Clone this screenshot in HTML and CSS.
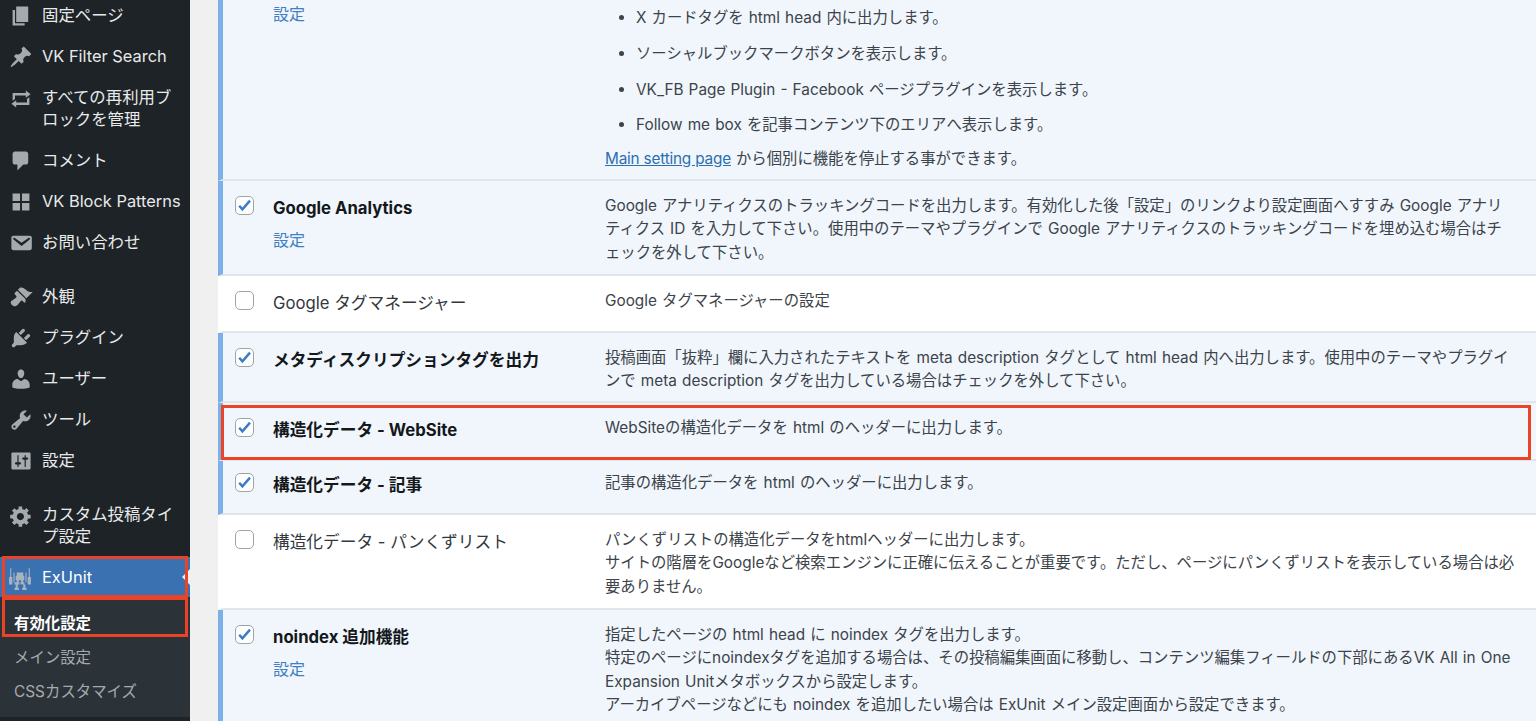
FILE: index.html
```html
<!DOCTYPE html>
<html lang="ja">
<head>
<meta charset="utf-8">
<title>ExUnit 有効化設定</title>
<link rel="stylesheet" href="styles.css">
</head>
<body>
<div class="app">
  <nav class="sidebar">
    <ul class="menu">
      <li class="item"><svg class="icon" viewBox="0 0 20 20"><path d="M6 15V2h10v13H6zm-1 1h8v2H3V5h2v11z"/></svg><span>固定ページ</span></li>
      <li class="item"><svg class="icon" viewBox="0 0 20 20"><path d="M10.44 3.02l1.82-1.82 6.36 6.35-1.83 1.82c-1.05-.68-2.48-.57-3.41.36l-.75.75c-.92.93-1.04 2.35-.35 3.41l-1.83 1.82-2.41-2.41-2.8 2.79c-.42.42-3.38 2.71-3.8 2.29s1.86-3.39 2.28-3.81l2.79-2.79L4.1 9.36l1.83-1.82c1.05.69 2.48.57 3.4-.36l.75-.75c.93-.92 1.05-2.35.36-3.41z"/></svg><span>VK Filter Search</span></li>
      <li class="item two"><svg class="icon" viewBox="0 0 20 20"><path d="M5 7v3l-2 1.5V5h11V3l4 3.01L14 9V7H5zm10 6v-3l2-1.5V15H6v2l-4-3.01L6 11v2h9z"/></svg><span>すべての再利用ブ<br>ロックを管理</span></li>
      <li class="item"><svg class="icon" viewBox="0 0 20 20"><path d="M5 2h9c1.1 0 2 .9 2 2v7c0 1.100-.9 2-2 2h-2l-5 5v-5H5c-1.100 0-2-.9-2-2V4c0-1.100.9-2 2-2z"/></svg><span>コメント</span></li>
      <li class="item"><svg class="icon" viewBox="0 0 20 20"><path d="M3 3h6.200v6.200H3zM10.800 3H17v6.200h-6.200zM3 10.800h6.200V17H3zM10.800 10.800H17V17h-6.200z"/></svg><span>VK Block Patterns</span></li>
      <li class="item"><svg class="icon" viewBox="0 0 20 20"><path d="M3.870 4h13.250C18.370 4 19 4.590 19 5.790v8.420c0 1.190-.63 1.790-1.880 1.790H3.870c-1.250 0-1.880-.6-1.880-1.790V5.790c0-1.200.63-1.790 1.880-1.790zm6.620 8.600l6.740-5.530c.24-.2.43-.66.13-1.070-.29-.41-.82-.42-1.170-.17l-5.700 3.860L4.800 5.830c-.35-.25-.88-.24-1.170.17-.3.41-.11.87.13 1.070z"/></svg><span>お問い合わせ</span></li>
      <li class="sep"></li>
      <li class="item"><svg class="icon" viewBox="0 0 20 20"><path d="M14.480 11.060L7.410 3.990l1.500-1.500c.5-.56 2.300-.47 3.510.32 1.210.8 1.430 1.280 2.910 2.100 1.180.64 2.450 1.260 4.450.85zm-.71.71L6.700 4.700 4.930 6.470c-.39.39-.39 1.020 0 1.410l1.060 1.060c.39.39.39 1.030 0 1.420-.6.6-1.430 1.110-2.210 1.690-.35.26-.7.53-1.010.84C1.430 13.230.78 15 2.500 16.720c1.700 1.700 3.500 1.050 4.840-.27.3-.3.57-.65.83-1 .58-.78 1.090-1.610 1.690-2.210.39-.39 1.030-.39 1.420 0l1.060 1.060c.39.39 1.020.39 1.410 0z"/></svg><span>外観</span></li>
      <li class="item"><svg class="icon" viewBox="0 0 20 20"><path d="M13.110 4.360L9.870 7.600 8 5.730l3.240-3.240c.35-.34 1.050-.2 1.560.32.52.51.66 1.210.31 1.550zm-8 1.770l.91-1.120 9.010 9.010-1.190.84c-.71.71-2.630 1.160-3.820 1.160H6.140L4.900 17.260c-.59.59-1.540.59-2.120 0-.59-.58-.59-1.530 0-2.120l1.240-1.240v-3.880c0-1.130.4-3.190 1.090-3.890zm7.260 3.970l3.240-3.240c.34-.35 1.040-.21 1.550.31.52.51.66 1.210.31 1.550l-3.240 3.250z"/></svg><span>プラグイン</span></li>
      <li class="item"><svg class="icon" viewBox="0 0 20 20"><path d="M10 9.250c-2.270 0-2.730-3.440-2.730-3.440C7 4.020 7.820 2 9.970 2c2.160 0 2.980 2.020 2.710 3.810 0 0-.41 3.440-2.680 3.440zm0 2.570L12.720 10c2.390 0 4.520 2.330 4.520 4.530v2.490s-3.650 1.130-7.240 1.130c-3.650 0-7.240-1.130-7.240-1.130v-2.490c0-2.250 1.940-4.530 4.470-4.530z"/></svg><span>ユーザー</span></li>
      <li class="item"><svg class="icon" viewBox="0 0 20 20"><path d="M16.680 9.770c-1.340 1.340-3.300 1.670-4.950.99l-5.410 6.520c-.99.99-2.590.99-3.580 0s-.99-2.590 0-3.570l6.520-5.420c-.68-1.650-.35-3.610.99-4.950 1.280-1.280 3.120-1.620 4.720-1.060l-2.890 2.890 2.820 2.820 2.860-2.870c.53 1.580.18 3.390-1.080 4.650zM3.810 16.210c.4.39 1.040.39 1.430 0 .4-.4.4-1.040 0-1.430-.39-.4-1.030-.4-1.430 0-.39.39-.39 1.030 0 1.430z"/></svg><span>ツール</span></li>
      <li class="item"><svg class="icon" viewBox="0 0 20 20"><path d="M18 16V4c0-.55-.45-1-1-1H3c-.55 0-1 .45-1 1v12c0 .55.45 1 1 1h14c.55 0 1-.45 1-1zM8 11h1c.55 0 1 .45 1 1s-.45 1-1 1H8v1.500c0 .28-.22.5-.5.5s-.5-.22-.5-.5V13H6c-.55 0-1-.45-1-1s.45-1 1-1h1V5.500c0-.28.22-.5.5-.5s.5.22.5.5V11zm5-2h-1c-.55 0-1-.45-1-1s.45-1 1-1h1V5.500c0-.28.22-.5.5-.5s.5.22.5.5V7h1c.55 0 1 .45 1 1s-.45 1-1 1h-1v5.500c0 .28-.22.5-.5.5s-.5-.22-.5-.5V9z"/></svg><span>設定</span></li>
      <li class="sep"></li>
      <li class="item two"><svg class="icon" viewBox="0 0 20 20"><path d="M18 12h-2.180c-.17.7-.44 1.350-.81 1.930l1.540 1.540-2.100 2.100-1.540-1.540c-.58.36-1.230.63-1.910.79V19H8v-2.180c-.68-.16-1.330-.43-1.910-.79l-1.540 1.540-2.120-2.120 1.540-1.540c-.36-.58-.63-1.230-.79-1.910H1V9.030h2.170c.16-.7.44-1.350.8-1.940L2.430 5.550l2.100-2.100 1.540 1.540c.58-.37 1.240-.64 1.930-.81V2h3v2.180c.68.16 1.330.43 1.910.79l1.540-1.540 2.120 2.120-1.540 1.540c.36.59.64 1.240.8 1.940H18V12zm-8.500 1.500c1.660 0 3-1.340 3-3s-1.340-3-3-3-3 1.340-3 3 1.340 3 3 3z"/></svg><span>カスタム投稿タイ<br>プ設定</span></li>
      <li class="item current">
        <svg class="icon robot" viewBox="0 0 20 22"><path d="M1 2h1v8h1v7H0v-7h1zM18 2h1v8h1v7h-3v-7h1zM4 6h1v9H4zM15 6h1v9h-1zM7 6h6v3h1v4h-1v2h-2v-2H9v2H7v-2H6V9h1zM6 15h3v2h1v-2h4v2h1v3h1v2h-4v-2h1v-3h-2v-1h-2v1H8v3h1v2H5v-2h1v-3H5v-2z"/></svg>
        <span>ExUnit</span>
      </li>
      <li class="sub">
        <div class="sub-item active">有効化設定</div>
        <div class="sub-item">メイン設定</div>
        <div class="sub-item">CSSカスタマイズ</div>
      </li>
    </ul>
    <div class="mark mark-top"></div>
    <div class="mark mark-sub"></div>
  </nav>
  <main class="content">
    <div class="table">
      <div class="row on first">
        <span></span>
        <div class="name"><a class="link">設定</a></div>
        <div class="desc">
          <ul class="bullets">
            <li>X カードタグを html head 内に出力します。</li>
            <li>ソーシャルブックマークボタンを表示します。</li>
            <li>VK_FB Page Plugin - Facebook ページプラグインを表示します。</li>
            <li>Follow me box を記事コンテンツ下のエリアへ表示します。</li>
          </ul>
          <a class="inline">Main setting page</a> から個別に機能を停止する事ができます。
        </div>
      </div>
      <div class="row on">
        <span class="check"><svg viewBox="0 0 20 20"><path d="M4 11l4 4.500L17.500 4.500"/></svg></span>
        <div class="name"><div class="title">Google Analytics</div><a class="link">設定</a></div>
        <div class="desc">Google アナリティクスのトラッキングコードを出力します。有効化した後「設定」のリンクより設定画面へすすみ Google アナリ<br>ティクス ID を入力して下さい。使用中のテーマやプラグインで Google アナリティクスのトラッキングコードを埋め込む場合はチ<br>ェックを外して下さい。</div>
      </div>
      <div class="row">
        <span class="check"></span>
        <div class="name"><div class="title">Google タグマネージャー</div></div>
        <div class="desc">Google タグマネージャーの設定</div>
      </div>
      <div class="row on">
        <span class="check"><svg viewBox="0 0 20 20"><path d="M4 11l4 4.500L17.500 4.500"/></svg></span>
        <div class="name"><div class="title">メタディスクリプションタグを出力</div></div>
        <div class="desc">投稿画面「抜粋」欄に入力されたテキストを meta description タグとして html head 内へ出力します。使用中のテーマやプラグイ<br>ンで meta description タグを出力している場合はチェックを外して下さい。</div>
      </div>
      <div class="row on">
        <span class="check"><svg viewBox="0 0 20 20"><path d="M4 11l4 4.500L17.500 4.500"/></svg></span>
        <div class="name"><div class="title">構造化データ - WebSite</div></div>
        <div class="desc">WebSiteの構造化データを html のヘッダーに出力します。</div>
      </div>
      <div class="row on tight">
        <span class="check"><svg viewBox="0 0 20 20"><path d="M4 11l4 4.500L17.500 4.500"/></svg></span>
        <div class="name"><div class="title">構造化データ - 記事</div></div>
        <div class="desc">記事の構造化データを html のヘッダーに出力します。</div>
      </div>
      <div class="row">
        <span class="check"></span>
        <div class="name"><div class="title">構造化データ - パンくずリスト</div></div>
        <div class="desc">パンくずリストの構造化データをhtmlヘッダーに出力します。<br>サイトの階層をGoogleなど検索エンジンに正確に伝えることが重要です。ただし、ページにパンくずリストを表示している場合は必<br>要ありません。</div>
      </div>
      <div class="row on">
        <span class="check"><svg viewBox="0 0 20 20"><path d="M4 11l4 4.500L17.500 4.500"/></svg></span>
        <div class="name"><div class="title">noindex 追加機能</div><a class="link">設定</a></div>
        <div class="desc">指定したページの html head に noindex タグを出力します。<br>特定のページにnoindexタグを追加する場合は、その投稿編集画面に移動し、コンテンツ編集フィールドの下部にあるVK All in One<br>Expansion Unitメタボックスから設定します。<br>アーカイブページなどにも noindex を追加したい場合は ExUnit メイン設定画面から設定できます。</div>
      </div>
    </div>
    <div class="mark mark-row"></div>
  </main>
</div>
</body>
</html>
```

FILE: styles.css
```css
* { box-sizing: border-box; }
html, body { margin: 0; padding: 0; height: 721px; overflow: hidden; }
body {
  background: #f0f0f1;
  font-family: Inter, "Noto Sans CJK JP", "Liberation Sans", sans-serif;
  -webkit-font-smoothing: antialiased;
}
.app { display: flex; height: 721px; overflow: hidden; }

/* Sidebar */
.sidebar {
  position: relative;
  flex: 0 0 190px;
  height: 721px;
  background: #1d2327;
  color: #e9eaeb;
  font-size: 16.400px;
}
.menu { list-style: none; margin: -5px 0 0; padding: 0; }
.item {
  display: flex;
  align-items: center;
  gap: 9px;
  height: 41px;
  padding-left: 9px;
  line-height: 21.500px;
  white-space: nowrap;
}
.item.two { height: 63px; align-items: flex-start; padding-top: 10px; }
.icon { flex: 0 0 24px; width: 24px; height: 24px; fill: #a7aaad; }
.sep { height: 13px; }
.item.current {
  position: relative;
  height: 40px;
  padding-top: 2px;
  background: #3a71b0;
  color: #fff;
  gap: 10px;
}
.item.current::after {
  content: "";
  position: absolute;
  right: 0;
  top: 50%;
  margin-top: -8px;
  border: 8px solid transparent;
  border-right-color: #f0f0f1;
  border-left-width: 0;
}
.robot { flex: 0 0 22px; width: 22px; height: 24px; margin-right: 1px; fill: #a9b3bf; }
.sub {
  background: #2c3338;
  padding: 10px 0 8px;
}
.sub-item {
  height: 34px;
  line-height: 34px;
  padding-left: 14px;
  font-size: 15.400px;
  color: #a7aaad;
  white-space: nowrap;
}
.sub-item.active { color: #fff; font-weight: 700; }

/* Red annotation boxes */
.mark { position: absolute; border: 3px solid #ea4328; pointer-events: none; }
.mark-top { left: 2px; top: 556px; width: 186px; height: 42px; }
.mark-sub { left: 2px; top: 597px; width: 186px; height: 40px; }
.mark-row { left: 31px; top: 405px; width: 1310px; height: 55px; }

/* Content */
.content { position: relative; flex: 1; min-width: 0; padding-left: 28px; }
.table {
  display: grid;
  grid-template-rows: 181px 95px 57px 70px 58px 54px 95px 120px;
  height: 721px;
}
.row {
  display: grid;
  grid-template-columns: 19px 313px 1fr;
  column-gap: 19px;
  align-items: start;
  padding: 12px 0 0 12px;
  background: #fff;
  border-left: 5px solid #fff;
  border-bottom: 2px solid #e1e4e8;
  overflow: hidden;
}
.row.on { background: #f0f6fc; border-left-color: #7cb0e8; }
.row.first { padding-top: 2px; }
.row.tight { padding-top: 9px; }
.check {
  display: block;
  width: 19px;
  height: 19px;
  margin-top: 3px;
  background: #fff;
  border: 1.500px solid #9ea3a8;
  border-radius: 5px;
}
.check svg { display: block; width: 16px; height: 16px; fill: none; stroke: #3a7cc5; stroke-width: 3; }
.name { min-width: 0; }
.title {
  font-size: 16.700px;
  line-height: 30px;
  color: #32383d;
  white-space: nowrap;
}
.on .title { font-weight: 700; color: #14181b; }
.link {
  display: block;
  margin-top: 5px;
  font-size: 16px;
  line-height: 24px;
  color: #3f7fc2;
}
.first .link { margin-top: 0; }
.desc {
  margin-top: .500px;
  font-size: 15.350px;
  word-spacing: .800px;
  line-height: 23.500px;
  color: #3c434a;
  white-space: nowrap;
}
.first .desc { margin-top: 0; }
.bullets { margin: 4px 0 10.500px; padding-left: 31px; }
.bullets li { margin-bottom: 12.300px; }
.bullets li:last-child { margin-bottom: 0; }
.inline { color: #2c6fb0; text-decoration: underline; letter-spacing: -.200px; word-spacing: 0; }
```
